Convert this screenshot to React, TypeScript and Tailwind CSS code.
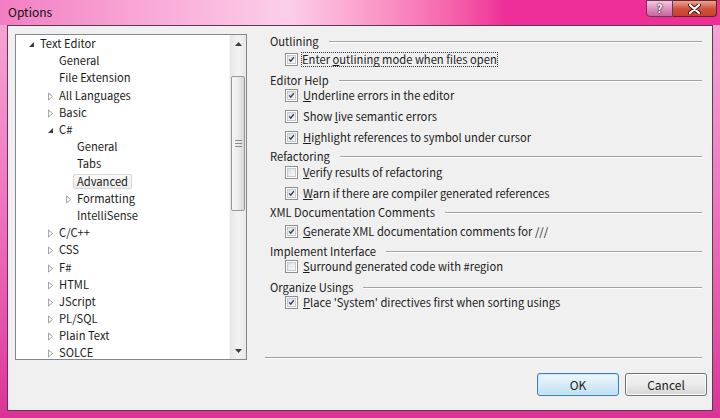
import React from 'react';

type TreeItem = { label: string; level: 0 | 1 | 2; arrow?: 'open' | 'closed'; selected?: boolean };

const tree: TreeItem[] = [
  { label: 'Text Editor', level: 0, arrow: 'open' },
  { label: 'General', level: 1 },
  { label: 'File Extension', level: 1 },
  { label: 'All Languages', level: 1, arrow: 'closed' },
  { label: 'Basic', level: 1, arrow: 'closed' },
  { label: 'C#', level: 1, arrow: 'open' },
  { label: 'General', level: 2 },
  { label: 'Tabs', level: 2 },
  { label: 'Advanced', level: 2, selected: true },
  { label: 'Formatting', level: 2, arrow: 'closed' },
  { label: 'IntelliSense', level: 2 },
  { label: 'C/C++', level: 1, arrow: 'closed' },
  { label: 'CSS', level: 1, arrow: 'closed' },
  { label: 'F#', level: 1, arrow: 'closed' },
  { label: 'HTML', level: 1, arrow: 'closed' },
  { label: 'JScript', level: 1, arrow: 'closed' },
  { label: 'PL/SQL', level: 1, arrow: 'closed' },
  { label: 'Plain Text', level: 1, arrow: 'closed' },
  { label: 'SOLCE', level: 1, arrow: 'closed' },
];

const indent = ['pl-[12px]', 'pl-[31px]', 'pl-[49px]'];

type Row =
  | { kind: 'header'; text: string; mt: string }
  | { kind: 'check'; checked: boolean; pre?: string; hot: string; post: string; focus?: boolean; mt: string };

// vertical spacing read off the screenshot, hence the uneven margins
const rows: Row[] = [
  { kind: 'header', text: 'Outlining', mt: 'mt-0' },
  { kind: 'check', checked: true, pre: 'Enter ', hot: 'o', post: 'utlining mode when files open', focus: true, mt: 'mt-[3px]' },
  { kind: 'header', text: 'Editor Help', mt: 'mt-[6px]' },
  { kind: 'check', checked: true, hot: 'U', post: 'nderline errors in the editor', mt: 'mt-0' },
  { kind: 'check', checked: true, pre: 'Show ', hot: 'l', post: 'ive semantic errors', mt: 'mt-[6px]' },
  { kind: 'check', checked: true, hot: 'H', post: 'ighlight references to symbol under cursor', mt: 'mt-[6px]' },
  { kind: 'header', text: 'Refactoring', mt: 'mt-[4px]' },
  { kind: 'check', checked: false, hot: 'V', post: 'erify results of refactoring', mt: 'mt-px' },
  { kind: 'check', checked: true, hot: 'W', post: 'arn if there are compiler generated references', mt: 'mt-[6px]' },
  { kind: 'header', text: 'XML Documentation Comments', mt: 'mt-[4px]' },
  { kind: 'check', checked: true, hot: 'G', post: 'enerate XML documentation comments for ///', mt: 'mt-[4px]' },
  { kind: 'header', text: 'Implement Interface', mt: 'mt-[5px]' },
  { kind: 'check', checked: false, hot: 'S', post: 'urround generated code with #region', mt: 'mt-0' },
  { kind: 'header', text: 'Organize Usings', mt: 'mt-[6px]' },
  { kind: 'check', checked: true, hot: 'P', post: "lace 'System' directives first when sorting usings", mt: 'mt-0' },
];

function Arrow({ type }: { type: 'open' | 'closed' }) {
  if (type === 'open') {
    return (
      <svg width="7" height="7" viewBox="0 0 7 7" className="mt-[1px]">
        <path d="M6 1 L6 6 L1 6 Z" fill="#3a3a3a" />
      </svg>
    );
  }
  return (
    <svg width="7" height="9" viewBox="0 0 7 9" className="mt-[2px]">
      <path d="M1.5 1 L5.5 4.5 L1.5 8 Z" fill="white" stroke="#a2a2a2" strokeWidth="1" />
    </svg>
  );
}

function CheckBox({ checked }: { checked: boolean }) {
  return (
    <span className="w-[13px] h-[13px] shrink-0 border border-[#8e8f8f] bg-white p-px">
      <span className="w-full h-full flex items-center justify-center border border-[#c6cacf] bg-gradient-to-br from-[#dcdfe3] to-[#fafafa]">
        {checked && (
          <svg width="9" height="9" viewBox="0 0 9 9">
            <path d="M1.6 4.4 L3.6 6.7 L7.4 1.6" fill="none" stroke="#2f3c57" strokeWidth="1.7" />
          </svg>
        )}
      </span>
    </span>
  );
}

export default function App() {
  return (
    <div className="w-[720px] h-[418px] relative flex flex-col overflow-hidden bg-gradient-to-b from-[#f6a9d6] via-[#ee73bd] to-[#dc3198] font-['Noto_Sans_CJK_KR','Noto_Sans',sans-serif] text-[11.2px] text-[#1b1b1b]">
      {/* Title bar */}
      <div className="h-[25px] shrink-0 flex items-center pl-[8px] bg-gradient-to-r from-[#f27ec3] via-[#fbcfe9] via-40% to-[#ee2f98] to-70%">
        <span className="text-[12px] text-[#111] leading-none mt-[-2px]">Options</span>
      </div>
      <div className="absolute top-0 right-[3px] flex">
        <div className="w-[27px] h-[17px] rounded-bl-[4px] border border-[#6f3558] bg-gradient-to-b from-[#f3c9e2] via-[#dc93bf] to-[#c7669f] flex items-center justify-center">
          <span className="text-white font-bold text-[11px] leading-none [text-shadow:0_0_2px_#2b1020,0_0_1px_#2b1020]">?</span>
        </div>
        <div className="w-[44px] h-[17px] rounded-br-[4px] border border-l-0 border-[#6a2020] bg-gradient-to-b from-[#e8a496] via-[#d0533e] to-[#c8402b] flex items-center justify-center">
          <svg width="13" height="10" viewBox="0 0 13 10">
            <path d="M2 1 L11 9 M11 1 L2 9" stroke="#3a1010" strokeWidth="4" strokeLinecap="round" />
            <path d="M2 1 L11 9 M11 1 L2 9" stroke="white" strokeWidth="2.2" strokeLinecap="round" />
          </svg>
        </div>
      </div>

      {/* Client area */}
      <div className="flex-1 mx-[7px] mb-[7px] border border-[#5e3a52] bg-[#f0f0f0] flex flex-col">
        <div className="flex pt-[8px] pl-[7px]">
          {/* Tree */}
          <div className="w-[232px] h-[326px] border border-[#828790] bg-white flex">
            <div className="flex-1 overflow-hidden">
              {tree.map((t, i) => (
                <div key={i} className={`h-[17.2px] flex items-center ${indent[t.level]}`}>
                  <span className="w-[12px] h-full shrink-0 flex items-center">
                    {t.arrow && <Arrow type={t.arrow} />}
                  </span>
                  <span
                    className={
                      t.selected
                        ? 'ml-[-4px] px-[3px] h-[15px] leading-[13px] border border-[#d9d9d9] bg-gradient-to-b from-[#fafafa] to-[#ececec] rounded-[2px]'
                        : 'leading-[15px] whitespace-nowrap'
                    }
                  >
                    {t.label}
                  </span>
                </div>
              ))}
            </div>
            {/* Scrollbar */}
            <div className="w-[17px] flex flex-col border-l border-[#f7f7f7] bg-gradient-to-r from-[#e6e6e6] via-[#f3f3f3] to-[#e8e8e8]">
              <div className="h-[17px] flex items-center justify-center">
                <svg width="7" height="4" viewBox="0 0 7 4">
                  <path d="M0 4 L3.5 0 L7 4 Z" fill="#3c3c3c" />
                </svg>
              </div>
              <div className="mt-[24px] h-[135px] mx-px rounded-[2px] border border-[#979797] bg-gradient-to-r from-[#f6f6f6] via-[#ececec] to-[#d6d6d6] flex flex-col items-center justify-center gap-[2px]">
                <span className="w-[7px] h-px bg-[#8a8a8a]" />
                <span className="w-[7px] h-px bg-[#8a8a8a]" />
                <span className="w-[7px] h-px bg-[#8a8a8a]" />
              </div>
              <div className="flex-1" />
              <div className="h-[17px] flex items-center justify-center">
                <svg width="7" height="4" viewBox="0 0 7 4">
                  <path d="M0 0 L7 0 L3.5 4 Z" fill="#3c3c3c" />
                </svg>
              </div>
            </div>
          </div>

          {/* Options */}
          <div className="ml-[18px] w-[439px] h-[326px] flex flex-col">
            {rows.map((r, i) =>
              r.kind === 'header' ? (
                <div key={i} className={`h-[15px] flex items-center pl-[5px] ${r.mt}`}>
                  <span className="leading-[15px] whitespace-nowrap">{r.text}</span>
                  <span className="flex-1 ml-[10px] mr-[2px] h-[2px] border-t border-[#a3a3a3] border-b border-b-white" />
                </div>
              ) : (
                <div key={i} className={`h-[15px] flex items-center pl-[20px] ${r.mt}`}>
                  <CheckBox checked={r.checked} />
                  <span
                    className={`whitespace-nowrap leading-[13px] ${
                      r.focus ? 'ml-[3px] border border-dotted border-[#333]' : 'ml-[4px] border border-transparent'
                    }`}
                  >
                    {r.pre}
                    <span className="underline underline-offset-[1px]">{r.hot}</span>
                    {r.post}
                  </span>
                </div>
              )
            )}
            <div className="flex-1" />
            <div className="h-[2px] mb-[1px] mr-[2px] border-t border-[#a0a0a0] border-b border-b-white" />
          </div>
        </div>

        {/* Buttons */}
        <div className="mt-[13px] flex justify-end gap-[6px] pr-[5px]">
          <button className="w-[82px] h-[23px] rounded-[3px] border border-[#3c7fb1] bg-gradient-to-b from-[#eef7fc] via-[#d8ecf8] to-[#bfe0f2] shadow-[inset_0_0_0_1px_#c9eafc] text-[12px] leading-none">
            OK
          </button>
          <button className="w-[82px] h-[23px] rounded-[3px] border border-[#707070] bg-gradient-to-b from-[#f2f2f2] via-[#ebebeb] to-[#d5d5d5] shadow-[inset_0_0_0_1px_#fbfbfb] text-[12px] leading-none">
            Cancel
          </button>
        </div>
      </div>
    </div>
  );
}
